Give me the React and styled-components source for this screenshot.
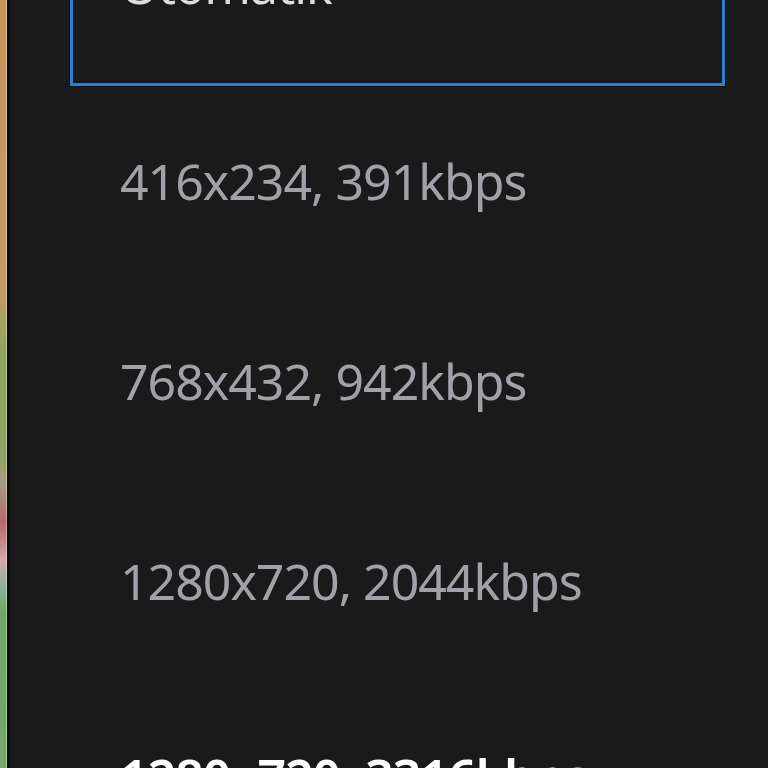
import React from "react";
import styled, { createGlobalStyle } from "styled-components";

const Global = createGlobalStyle`
  html, body {
    margin: 0;
    padding: 0;
    background: #1a1a1a;
  }
  body {
    font-family: "Noto Sans", "Open Sans", "Liberation Sans", sans-serif;
  }
`;

const Screen = styled.div`
  display: flex;
  width: 768px;
  height: 768px;
  overflow: hidden;
  background: #1a1a1a;
`;

const Thumb = styled.div`
  flex: 0 0 6px;
  background: linear-gradient(
    180deg,
    #c8955c 0%,
    #c49a66 39%,
    #9ea460 42%,
    #8ea35f 48%,
    #93a266 60%,
    #a89a84 63%,
    #b46a68 68%,
    #d5a9a8 73%,
    #8fb39a 76%,
    #6fa664 80%,
    #79a86a 100%
  );
  border-right: 1px solid rgba(255, 255, 255, 0.35);
`;

const Divider = styled.div`
  flex: 0 0 3px;
  background: #0d0d0b;
`;

const Panel = styled.div`
  flex: 1;
  padding-left: 60px;
  padding-right: 43px;
`;

const List = styled.ul`
  list-style: none;
  margin: -114px 0 0;
  padding: 0;
`;

const Item = styled.li`
  box-sizing: border-box;
  height: 200px;
  display: flex;
  align-items: center;
  padding-left: ${(p) => (p.$focused ? 47 : 50)}px;
  padding-bottom: ${(p) => (p.$active ? 18 : p.$focused ? 2 : 10)}px;
  border: ${(p) => (p.$focused ? "3px solid #2f7fcf" : "none")};
  box-shadow: ${(p) =>
    p.$focused ? "inset 0 0 0 1px #0b1a2a, 0 0 0 1px #0e0e0e" : "none"};
  font-size: 50px;
  letter-spacing: -1px;
  font-weight: ${(p) => (p.$active ? 600 : 400)};
  color: ${(p) =>
    p.$active ? "#ffffff" : p.$focused ? "#dcdcdc" : "#a1a1a9"};
`;

const options = [
  { label: "Otomatik", focused: true },
  { label: "416x234, 391kbps" },
  { label: "768x432, 942kbps" },
  { label: "1280x720, 2044kbps" },
  { label: "1280x720, 3316kbps", active: true },
];

export default function App() {
  return (
    <>
      <Global />
      <Screen>
        <Thumb />
        <Divider />
        <Panel>
          <List>
            {options.map((o) => (
              <Item key={o.label} $focused={o.focused} $active={o.active}>
                {o.label}
              </Item>
            ))}
          </List>
        </Panel>
      </Screen>
    </>
  );
}
